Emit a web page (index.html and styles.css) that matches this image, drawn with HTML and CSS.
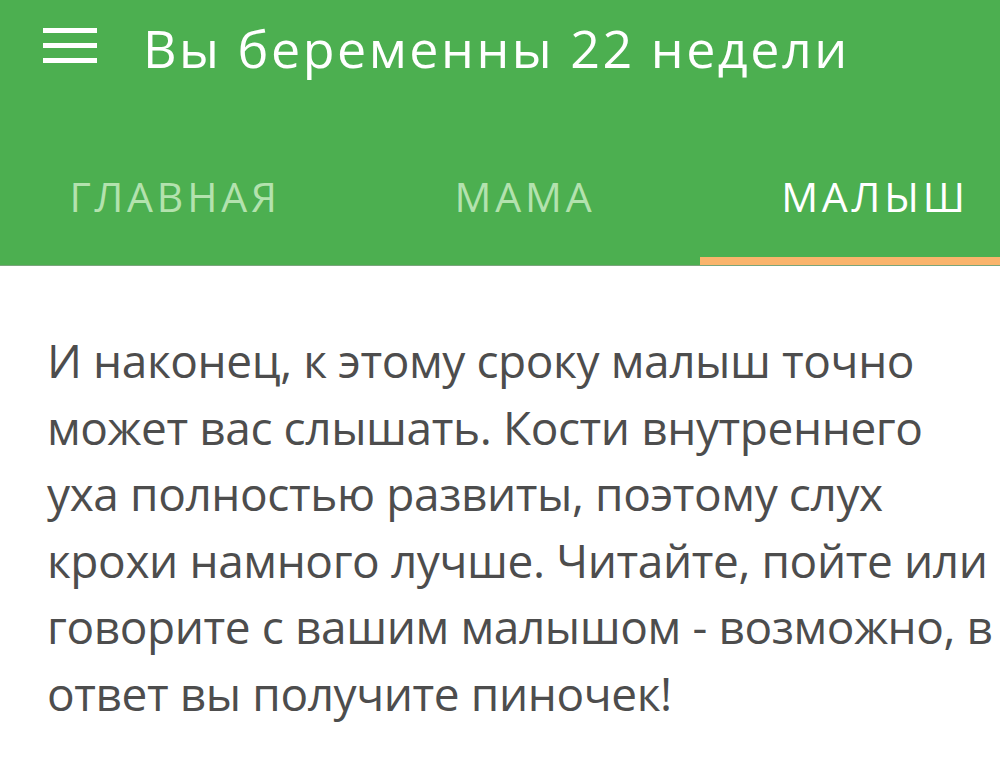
FILE: index.html
```html
<!DOCTYPE html>
<html lang="ru">
<head>
<meta charset="utf-8">
<link rel="stylesheet" href="styles.css">
</head>
<body>
<header class="appbar">
  <div class="toolbar">
    <svg class="menu" width="54" height="36" viewBox="0 0 54 36">
      <rect x="0" y="0" width="54" height="5" fill="#fff"/>
      <rect x="0" y="15" width="54" height="5" fill="#fff"/>
      <rect x="0" y="30" width="54" height="5" fill="#fff"/>
    </svg>
    <h1 class="title">Вы беременны 22 недели</h1>
  </div>
  <nav class="tabs">
    <div class="tab">ГЛАВНАЯ</div>
    <div class="tab">МАМА</div>
    <div class="tab active">МАЛЫШ</div>
  </nav>
</header>
<main class="content">
  <p class="text">И наконец, к этому сроку малыш точно<br>может вас слышать. Кости внутреннего<br>уха полностью развиты, поэтому слух<br>крохи намного лучше. Читайте, пойте или<br>говорите с вашим малышом - возможно, в<br>ответ вы получите пиночек!</p>
</main>
</body>
</html>
```
FILE: styles.css
```css
html, body {
  margin: 0;
  padding: 0;
  background: #ffffff;
}
body {
  width: 1000px;
  height: 776px;
  overflow: hidden;
  font-family: "Open Sans", "Noto Sans", sans-serif;
}
.appbar {
  background: #4caf50;
  height: 265px;
  display: flex;
  flex-direction: column;
  box-shadow: 0 1px 0 #7aa57c;
}
.toolbar {
  height: 96px;
  display: flex;
  align-items: center;
  padding-left: 43px;
}
.menu {
  display: block;
  flex-shrink: 0;
  margin-top: -4px;
}
.title {
  margin: 0 0 0 46px;
  font-weight: 400;
  font-size: 52px;
  letter-spacing: 2.5px;
  color: #ffffff;
  line-height: 1;
  white-space: nowrap;
}
.tabs {
  display: flex;
  overflow: hidden;
  margin-top: auto;
}
.tab {
  flex: 0 0 350px;
  height: 131px;
  box-sizing: border-box;
  border-bottom: 8px solid transparent;
  display: flex;
  align-items: center;
  justify-content: center;
  font-size: 41px;
  letter-spacing: 3.8px;
  color: #b3e2ae;
}
.tab.active {
  color: #ffffff;
  border-bottom-color: #f9b46c;
}
.content {
  padding: 62px 0 0 47px;
}
.text {
  margin: 0;
  font-size: 46px;
  line-height: 66.5px;
  letter-spacing: -0.4px;
  white-space: nowrap;
  color: #4d4d4d;
}
```
